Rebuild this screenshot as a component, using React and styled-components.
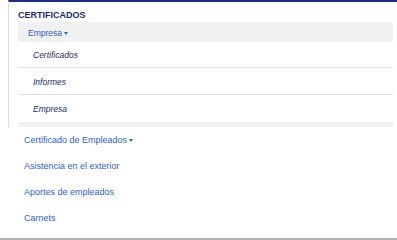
import React from "react";
import styled, { createGlobalStyle } from "styled-components";

const Global = createGlobalStyle`
  *{margin:0;padding:0;box-sizing:border-box;}
  html,body{background:#fff;}
  body{margin:0;font-family:"Liberation Sans",Arial,sans-serif;}
  #root{width:397px;height:240px;overflow:hidden;}
`;

const Page = styled.div`
  width: 397px;
  height: 240px;
  display: flex;
  flex-direction: column;
  border-bottom: 2px solid #b4b4b4;
`;

const Panel = styled.div`
  margin-left: 8px;
  border-top: 2px solid #1c2d7a;
  border-left: 1px solid #dcdcdc;
  padding: 7px 4px 0 9px;
`;

const Title = styled.h2`
  height: 13px;
  line-height: 12px;
  font-size: 9px;
  font-weight: bold;
  color: #1b2a6e;
`;

const Submenu = styled.div`
  background: #f1f1f1;
  padding-bottom: 5px;
`;

const Caret = styled.span`
  display: inline-block;
  width: 0;
  height: 0;
  margin-left: 2px;
  vertical-align: middle;
  border-left: 2.5px solid transparent;
  border-right: 2.5px solid transparent;
  border-top: 3px solid ${(p) => p.color || "#3060c8"};
`;

const Toggle = styled.div`
  height: 20px;
  line-height: 22px;
  padding-left: ${(p) => p.indent || 10}px;
  font-size: ${(p) => p.size || 8.5}px;
  color: #3060c8;
`;

const SubList = styled.ul`
  list-style: none;
  background: #fff;
`;

const SubItem = styled.li`
  height: ${(p) => p.h}px;
  line-height: ${(p) => p.h + 1}px;
  padding-left: 15px;
  font-size: 8.5px;
  font-style: italic;
  color: #1b2a5e;
  border-bottom: ${(p) => (p.last ? "none" : "1px solid #e2e2e2")};
`;

const Menu = styled.ul`
  list-style: none;
  padding-left: 24px;
`;

const MenuItem = styled.li`
  height: 26px;
  line-height: 27px;
  font-size: 9px;
  color: #3060c8;
`;

export default function App() {
  const sub = [
    { label: "Certificados", h: 26 },
    { label: "Informes", h: 27 },
    { label: "Empresa", h: 27, last: true },
  ];
  const items = ["Asistencia en el exterior", "Aportes de empleados", "Carnets"];
  return (
    <>
      <Global />
      <Page>
        <Panel>
          <Title>CERTIFICADOS</Title>
          <Submenu>
            <Toggle>
              Empresa<Caret />
            </Toggle>
            <SubList>
              {sub.map((s) => (
                <SubItem key={s.label} h={s.h} last={s.last}>
                  {s.label}
                </SubItem>
              ))}
            </SubList>
          </Submenu>
        </Panel>
        <Menu>
          <MenuItem>
            Certificado de Empleados<Caret />
          </MenuItem>
          {items.map((t) => (
            <MenuItem key={t}>{t}</MenuItem>
          ))}
        </Menu>
      </Page>
    </>
  );
}
